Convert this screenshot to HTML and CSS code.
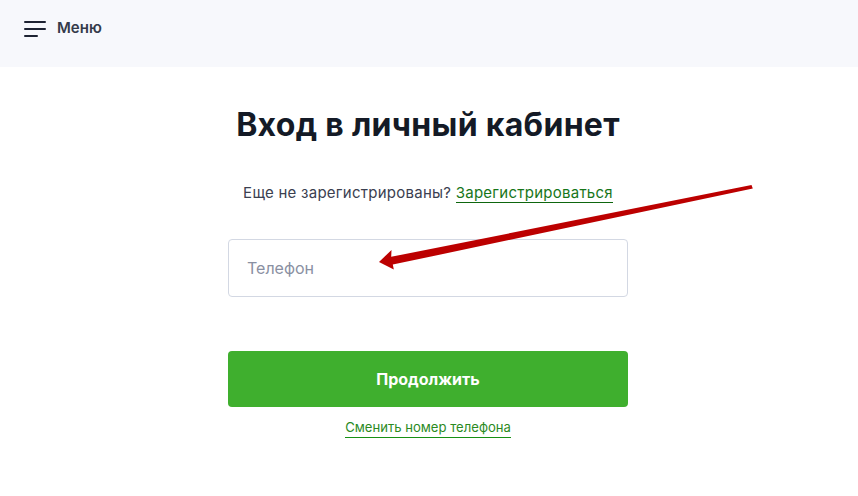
FILE: index.html
```html
<!DOCTYPE html>
<html lang="ru">
<head>
  <meta charset="UTF-8">
  <meta name="viewport" content="width=device-width, initial-scale=1.0">
  <title>Вход в личный кабинет</title>
  <link rel="stylesheet" href="styles.css">
</head>
<body>
  <header class="header">
    <button class="menu-btn" type="button">
      <svg class="menu-icon" width="22" height="18" viewBox="0 0 22 18">
        <rect x="0" y="2" width="22" height="2" rx="1"/>
        <rect x="0" y="9" width="22" height="2" rx="1"/>
        <rect x="0" y="16" width="14" height="2" rx="1"/>
      </svg>
      <span>Меню</span>
    </button>
  </header>

  <main class="login">
    <h1>Вход в личный кабинет</h1>
    <p class="signup">Еще не зарегистрированы? <a href="#" class="link">Зарегистрироваться</a></p>
    <form class="login-form">
      <input type="tel" class="phone" placeholder="Телефон">
      <button type="submit" class="submit">Продолжить</button>
    </form>
    <a href="#" class="link small">Сменить номер телефона</a>
  </main>

  <svg class="arrow" width="858" height="496" viewBox="0 0 858 496">
    <path d="M751.5 185 L752.8 188.6 L392.8 264.6 L393.8 269.5 L379 262 L391.5 250 L391.2 256.8 Z" fill="#bc0000"/>
  </svg>
</body>
</html>
```

FILE: styles.css
```css
* {
  margin: 0;
  padding: 0;
  box-sizing: border-box;
}

body {
  font-family: Inter, "Noto Sans", Arial, sans-serif;
  background-color: #fff;
  color: #141a26;
  position: relative;
  height: 496px;
  overflow: hidden;
}

.header {
  height: 67px;
  background-color: #f7f8fc;
  padding: 0 24px;
  display: flex;
  align-items: center;
}

.menu-btn {
  display: flex;
  align-items: center;
  gap: 11px;
  background: none;
  border: none;
  font-family: inherit;
  font-size: 15px;
  font-weight: 600;
  color: #343a4a;
  cursor: pointer;
  margin-top: -12px;
}

.menu-icon {
  fill: #1e2333;
}

.login {
  width: 400px;
  margin: 0 calc(50% - 199px) 0 calc(50% - 201px);
  display: flex;
  flex-direction: column;
  align-items: center;
  padding-top: 38px;
}

h1 {
  font-size: 32px;
  font-weight: 700;
  line-height: 40px;
  letter-spacing: 0.3px;
  color: #141a26;
}

.signup {
  margin-top: 37px;
  font-size: 15px;
  line-height: 22px;
  letter-spacing: 0.25px;
  color: #3b4050;
}

.link {
  color: #17761a;
  text-decoration: none;
  border-bottom: 1px solid #0e660e;
}

.login-form {
  width: 100%;
  margin-top: 35px;
  display: flex;
  flex-direction: column;
}

.phone {
  width: 100%;
  height: 58px;
  padding: 0 18px;
  border: 1px solid #d3d8e3;
  border-radius: 4px;
  font-family: inherit;
  font-size: 16px;
  color: #141a26;
}

.phone::placeholder {
  color: #8a90a2;
}

.submit {
  margin-top: 54px;
  height: 56px;
  border: none;
  border-radius: 4px;
  background-color: #3faf2e;
  color: #fff;
  font-family: inherit;
  font-size: 16px;
  font-weight: 700;
  cursor: pointer;
}

.small {
  margin-top: 10px;
  font-size: 13.1px;
  line-height: 20px;
  color: #2b8a1e;
  border-bottom-color: #179014;
}

.arrow {
  position: absolute;
  top: 0;
  left: 0;
  pointer-events: none;
}
```
